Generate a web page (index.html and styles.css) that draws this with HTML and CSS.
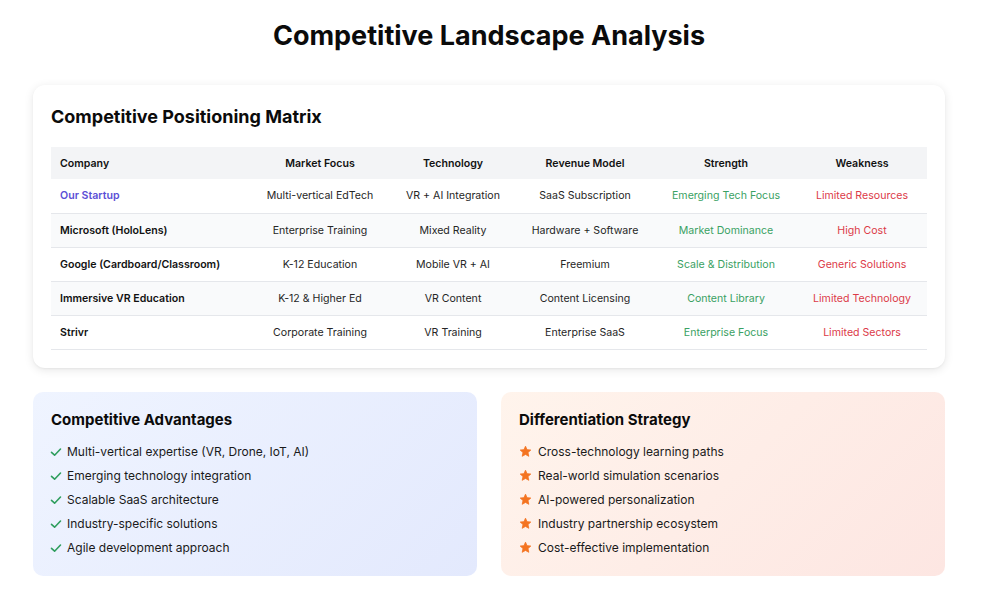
FILE: index.html
```html
<!DOCTYPE html>
<html lang="en">
<head>
<meta charset="utf-8">
<title>Competitive Landscape Analysis</title>
<link rel="stylesheet" href="styles.css">
</head>
<body>
<main class="page">
  <h1 class="title">Competitive Landscape Analysis</h1>

  <section class="card matrix">
    <h2 class="card-title">Competitive Positioning Matrix</h2>
    <table class="table">
      <thead>
        <tr>
          <th class="c-company">Company</th>
          <th class="c-market">Market Focus</th>
          <th class="c-tech">Technology</th>
          <th class="c-rev">Revenue Model</th>
          <th class="c-str">Strength</th>
          <th class="c-weak">Weakness</th>
        </tr>
      </thead>
      <tbody>
        <tr>
          <td class="company ours">Our Startup</td>
          <td>Multi-vertical EdTech</td>
          <td>VR + AI Integration</td>
          <td>SaaS Subscription</td>
          <td class="pos">Emerging Tech Focus</td>
          <td class="neg">Limited Resources</td>
        </tr>
        <tr>
          <td class="company">Microsoft (HoloLens)</td>
          <td>Enterprise Training</td>
          <td>Mixed Reality</td>
          <td>Hardware + Software</td>
          <td class="pos">Market Dominance</td>
          <td class="neg">High Cost</td>
        </tr>
        <tr>
          <td class="company">Google (Cardboard/Classroom)</td>
          <td>K-12 Education</td>
          <td>Mobile VR + AI</td>
          <td>Freemium</td>
          <td class="pos">Scale &amp; Distribution</td>
          <td class="neg">Generic Solutions</td>
        </tr>
        <tr>
          <td class="company">Immersive VR Education</td>
          <td>K-12 &amp; Higher Ed</td>
          <td>VR Content</td>
          <td>Content Licensing</td>
          <td class="pos">Content Library</td>
          <td class="neg">Limited Technology</td>
        </tr>
        <tr>
          <td class="company">Strivr</td>
          <td>Corporate Training</td>
          <td>VR Training</td>
          <td>Enterprise SaaS</td>
          <td class="pos">Enterprise Focus</td>
          <td class="neg">Limited Sectors</td>
        </tr>
      </tbody>
    </table>
  </section>

  <div class="panels">
    <section class="panel panel-blue">
      <h3 class="panel-title">Competitive Advantages</h3>
      <ul class="list">
        <li><svg class="ico check" viewBox="0 0 12 12"><path d="M1.5 6.3 L4.6 9.2 L10.5 3" fill="none" stroke="#2f9e5e" stroke-width="1.6" stroke-linecap="round" stroke-linejoin="round"/></svg>Multi-vertical expertise (VR, Drone, IoT, AI)</li>
        <li><svg class="ico check" viewBox="0 0 12 12"><path d="M1.5 6.3 L4.6 9.2 L10.5 3" fill="none" stroke="#2f9e5e" stroke-width="1.6" stroke-linecap="round" stroke-linejoin="round"/></svg>Emerging technology integration</li>
        <li><svg class="ico check" viewBox="0 0 12 12"><path d="M1.5 6.3 L4.6 9.2 L10.5 3" fill="none" stroke="#2f9e5e" stroke-width="1.6" stroke-linecap="round" stroke-linejoin="round"/></svg>Scalable SaaS architecture</li>
        <li><svg class="ico check" viewBox="0 0 12 12"><path d="M1.5 6.3 L4.6 9.2 L10.5 3" fill="none" stroke="#2f9e5e" stroke-width="1.6" stroke-linecap="round" stroke-linejoin="round"/></svg>Industry-specific solutions</li>
        <li><svg class="ico check" viewBox="0 0 12 12"><path d="M1.5 6.3 L4.6 9.2 L10.5 3" fill="none" stroke="#2f9e5e" stroke-width="1.6" stroke-linecap="round" stroke-linejoin="round"/></svg>Agile development approach</li>
      </ul>
    </section>
    <section class="panel panel-peach">
      <h3 class="panel-title">Differentiation Strategy</h3>
      <ul class="list">
        <li><svg class="ico star" viewBox="0 0 24 24"><path d="M12 2.2 L14.9 8.6 L21.8 9.3 L16.6 14 L18.1 20.9 L12 17.4 L5.9 20.9 L7.4 14 L2.2 9.3 L9.1 8.6 Z" fill="#f47421" stroke="#f47421" stroke-width="1.5" stroke-linejoin="round"/></svg>Cross-technology learning paths</li>
        <li><svg class="ico star" viewBox="0 0 24 24"><path d="M12 2.2 L14.9 8.6 L21.8 9.3 L16.6 14 L18.1 20.9 L12 17.4 L5.9 20.9 L7.4 14 L2.2 9.3 L9.1 8.6 Z" fill="#f47421" stroke="#f47421" stroke-width="1.5" stroke-linejoin="round"/></svg>Real-world simulation scenarios</li>
        <li><svg class="ico star" viewBox="0 0 24 24"><path d="M12 2.2 L14.9 8.6 L21.8 9.3 L16.6 14 L18.1 20.9 L12 17.4 L5.9 20.9 L7.4 14 L2.2 9.3 L9.1 8.6 Z" fill="#f47421" stroke="#f47421" stroke-width="1.5" stroke-linejoin="round"/></svg>AI-powered personalization</li>
        <li><svg class="ico star" viewBox="0 0 24 24"><path d="M12 2.2 L14.9 8.6 L21.8 9.3 L16.6 14 L18.1 20.9 L12 17.4 L5.9 20.9 L7.4 14 L2.2 9.3 L9.1 8.6 Z" fill="#f47421" stroke="#f47421" stroke-width="1.5" stroke-linejoin="round"/></svg>Industry partnership ecosystem</li>
        <li><svg class="ico star" viewBox="0 0 24 24"><path d="M12 2.2 L14.9 8.6 L21.8 9.3 L16.6 14 L18.1 20.9 L12 17.4 L5.9 20.9 L7.4 14 L2.2 9.3 L9.1 8.6 Z" fill="#f47421" stroke="#f47421" stroke-width="1.5" stroke-linejoin="round"/></svg>Cost-effective implementation</li>
      </ul>
    </section>
  </div>
</main>
</body>
</html>
```

FILE: styles.css
```css
* { box-sizing: border-box; }

html, body {
  margin: 0;
  padding: 0;
  background: #ffffff;
}

body {
  font-family: Inter, "Noto Sans", "Liberation Sans", sans-serif;
  color: #111111;
}

.page {
  width: 912px;
  margin-left: 33px;
  padding-top: 19px;
}

.title {
  margin: 0;
  font-size: 27px;
  line-height: 34px;
  font-weight: 700;
  text-align: center;
  color: #0b0b0b;
}

.card {
  background: #fff;
  border-radius: 12px;
  box-shadow: 0 2px 10px rgba(0, 0, 0, 0.10), 0 1px 2px rgba(0,0,0,0.04);
}

.matrix {
  margin-top: 32px;
  padding: 20px 18px 18px;
}

.card-title {
  margin: 0 0 18px;
  font-size: 18px;
  line-height: 24px;
  font-weight: 700;
  color: #0b0b0b;
}

.table {
  width: 100%;
  border-collapse: collapse;
  font-size: 10.6px;
  table-layout: fixed;
}

.table th {
  background: #f3f4f6;
  height: 32px;
  font-weight: 600;
  color: #111;
  text-align: center;
  padding: 0 9px;
}

.table td {
  height: 34px;
  text-align: center;
  color: #262626;
  padding: 0 9px;
  border-bottom: 1px solid #e5e7eb;
}

.table tbody tr:nth-child(even) td { background: #f9fafb; }

.table th.c-company, .table td.company { text-align: left; }

.c-company { width: 198px; }
.c-market { width: 142px; }
.c-tech { width: 124px; }
.c-rev { width: 140px; }
.c-str { width: 142px; }
.c-weak { width: 130px; }

.table td.company { font-weight: 600; color: #111; }
.table td.ours { color: #5b4fd6; }
.table td.pos { color: #3aa163; }
.table td.neg { color: #dc3a48; }

.panels {
  margin-top: 24px;
  display: grid;
  grid-template-columns: 1fr 1fr;
  gap: 24px;
}

.panel {
  border-radius: 10px;
  padding: 18px 18px 16px;
  min-height: 183px;
}

.panel-blue {
  background: linear-gradient(135deg, #eff4ff 0%, #e3e9fd 100%);
}

.panel-peach {
  background: linear-gradient(135deg, #fff4ec 0%, #fde6e2 100%);
}

.panel-title {
  margin: 0 0 10px;
  font-size: 15px;
  line-height: 20px;
  font-weight: 700;
  color: #0b0b0b;
}

.list {
  list-style: none;
  margin: 0;
  padding: 0;
}

.list li {
  display: flex;
  align-items: center;
  height: 24px;
  font-size: 12px;
  color: #1a1a1a;
}

.ico { flex: none; }
.check { width: 12px; height: 12px; margin-right: 5px; margin-left: -1px; }
.star { width: 13px; height: 13px; margin-right: 6px; }
```
